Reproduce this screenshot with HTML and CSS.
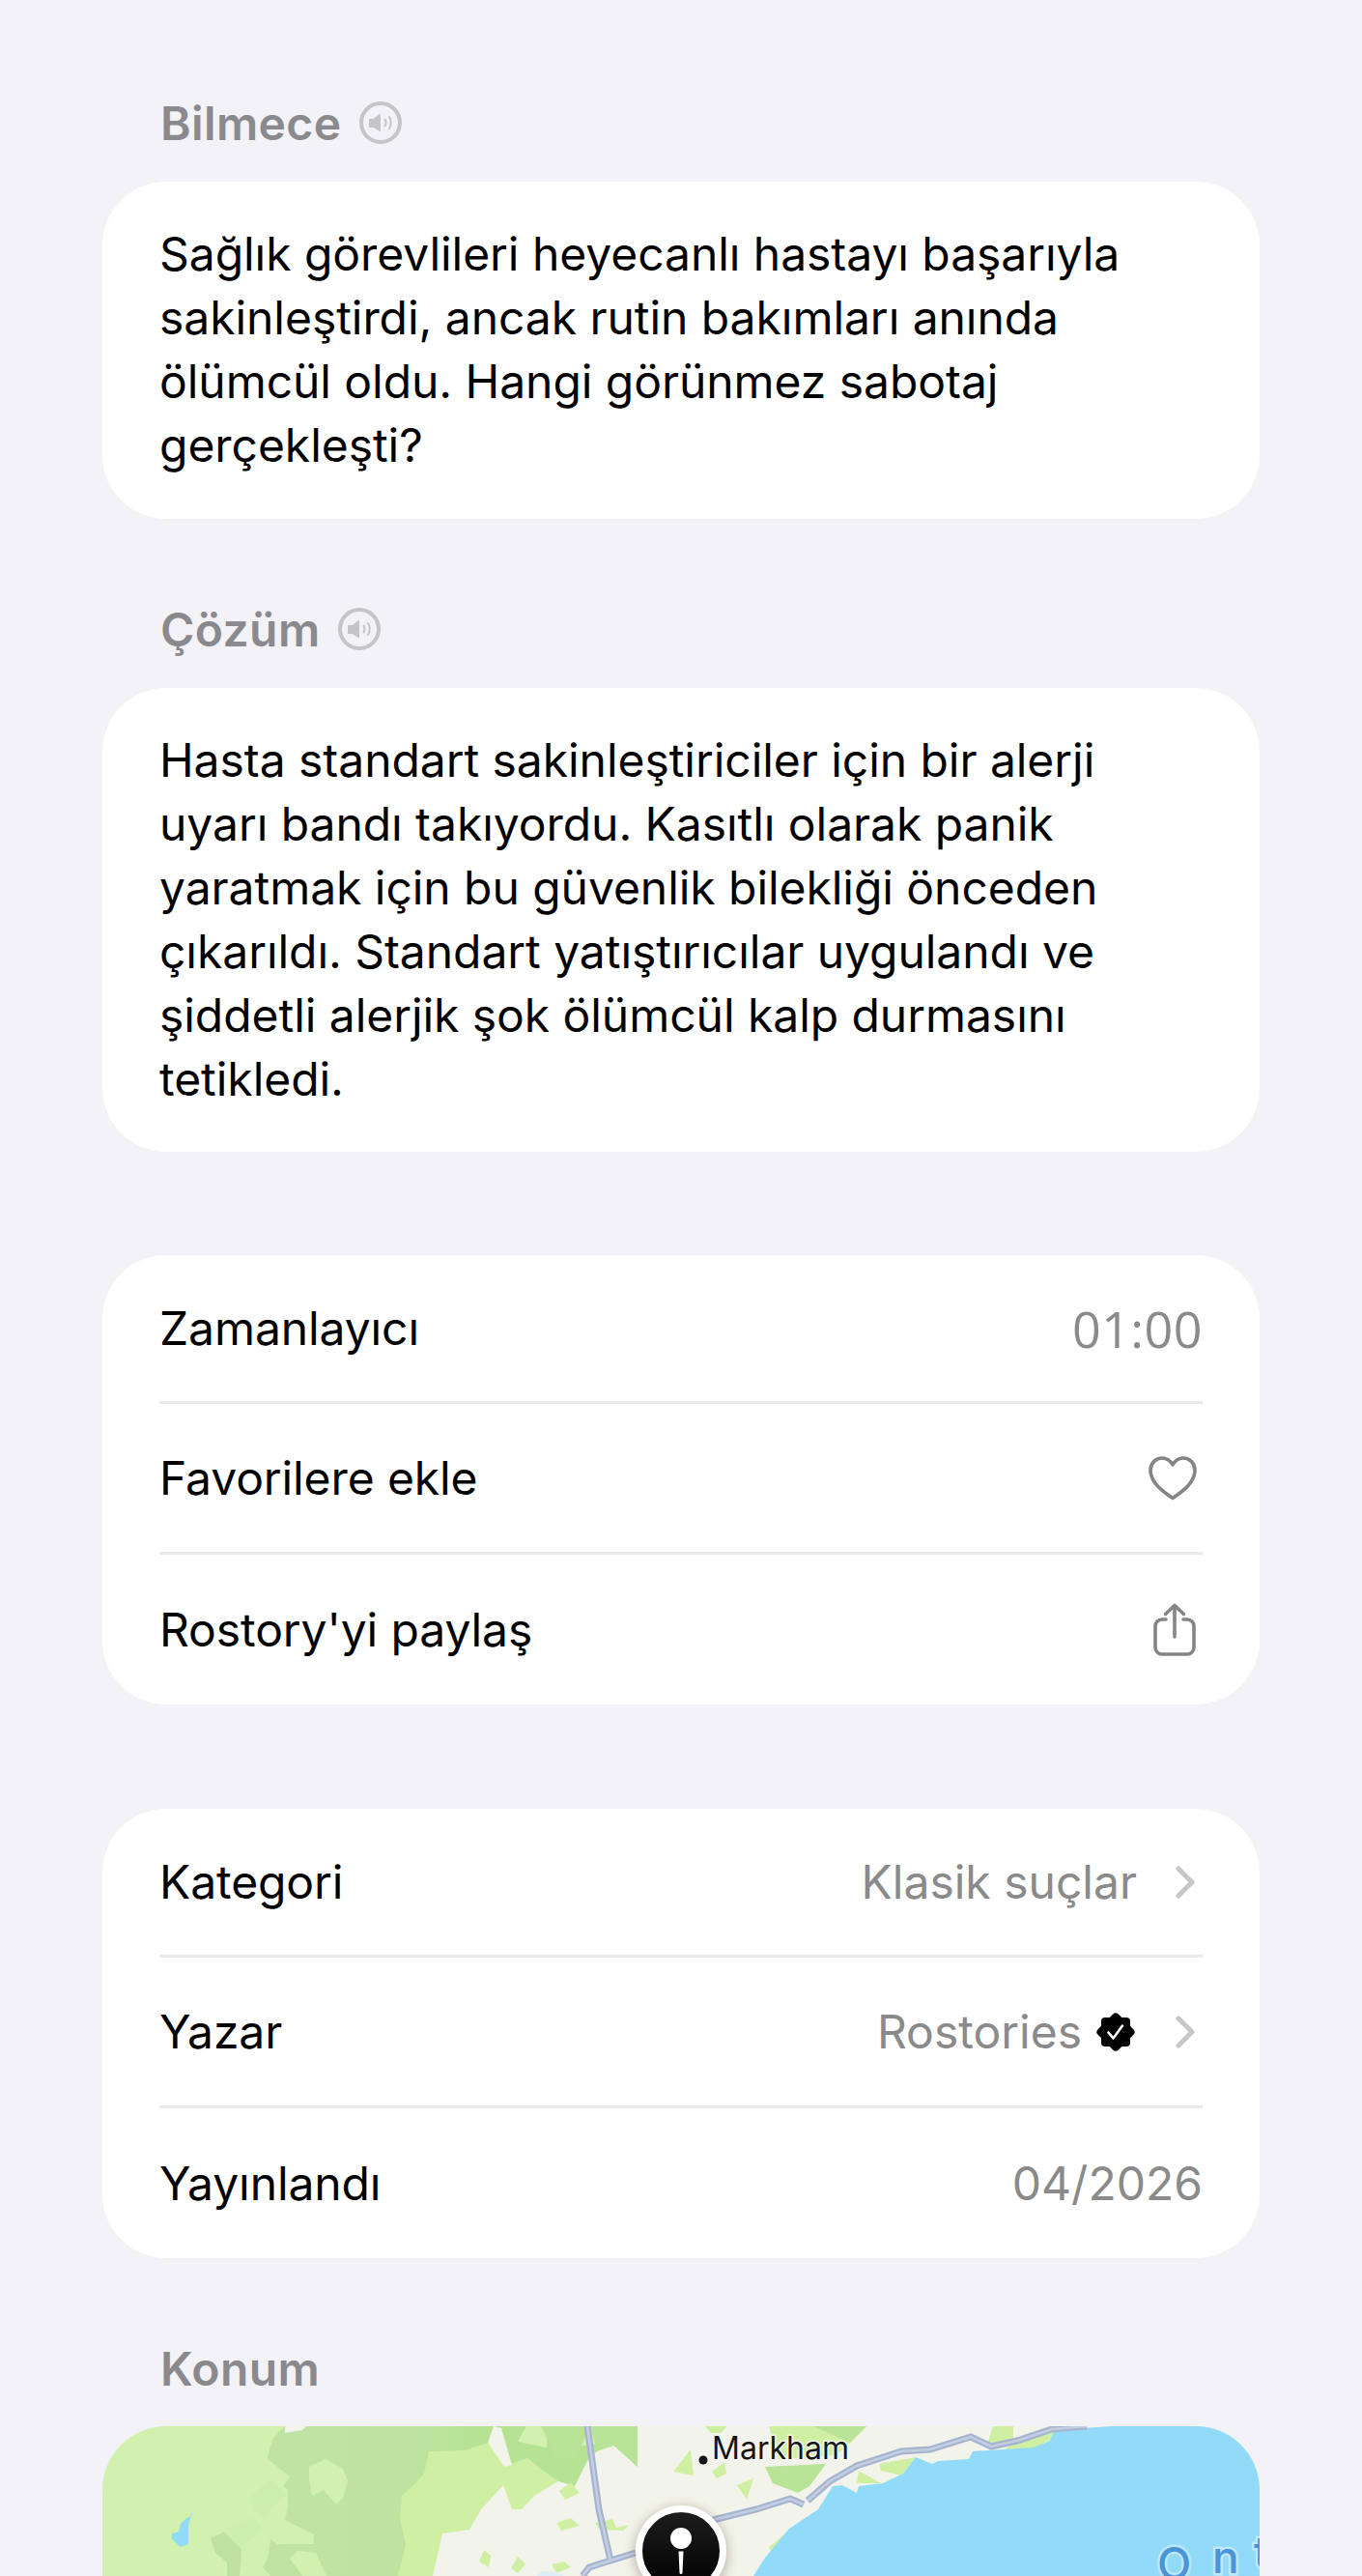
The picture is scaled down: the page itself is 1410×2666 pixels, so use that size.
FILE: index.html
```html
<!DOCTYPE html>
<html lang="tr">

<head>
    <meta charset="UTF-8">
    <meta name="viewport" content="width=device-width, initial-scale=1.0">
    <title>Rostory</title>
    <link rel="stylesheet" href="styles.css">
</head>

<body>
    <div class="page">

        <div class="label first">
            <h2>Bilmece</h2>
            <svg class="speaker" viewBox="0 0 44 44">
                <circle cx="22" cy="22" r="20" fill="none" stroke="#c5c5c8" stroke-width="4" />
                <path d="M10 18h4.5l7.5-5.5v19L14.500 27H10z" fill="#c5c5c8" />
                <path d="M26.500 18.500q2 3.500 0 7M31 16q3.500 6 0 12" fill="none" stroke="#c5c5c8" stroke-width="2" stroke-linecap="round" />
            </svg>
        </div>
        <div class="card text riddle">
            <p>Sağlık görevlileri heyecanlı hastayı başarıyla<br>sakinleştirdi, ancak rutin bakımları anında<br>ölümcül oldu. Hangi görünmez sabotaj<br>gerçekleşti?</p>
        </div>

        <div class="label">
            <h2>Çözüm</h2>
            <svg class="speaker" viewBox="0 0 44 44">
                <circle cx="22" cy="22" r="20" fill="none" stroke="#c5c5c8" stroke-width="4" />
                <path d="M10 18h4.5l7.5-5.5v19L14.500 27H10z" fill="#c5c5c8" />
                <path d="M26.500 18.500q2 3.500 0 7M31 16q3.500 6 0 12" fill="none" stroke="#c5c5c8" stroke-width="2" stroke-linecap="round" />
            </svg>
        </div>
        <div class="card text">
            <p>Hasta standart sakinleştiriciler için bir alerji<br>uyarı bandı takıyordu. Kasıtlı olarak panik<br>yaratmak için bu güvenlik bilekliği önceden<br>çıkarıldı. Standart yatıştırıcılar uygulandı ve<br>şiddetli alerjik şok ölümcül kalp durmasını<br>tetikledi.</p>
        </div>

        <div class="card list">
            <div class="row">
                <span>Zamanlayıcı</span>
                <span class="value timer">01:00</span>
            </div>
            <div class="row">
                <span>Favorilere ekle</span>
                <svg class="heart" viewBox="0 0 50 46">
                    <path d="M25 43.500C15 36.500 2 27.500 2 14.500 2 7.500 7.500 2 14 2c4.800 0 8.500 2.500 11 7 2.500-4.500 6.200-7 11-7 6.500 0 12 5.500 12 12.500 0 13-13 22-23 29z" fill="none" stroke="#858585" stroke-width="3.600" stroke-linejoin="round" />
                </svg>
            </div>
            <div class="row">
                <span>Rostory'yi paylaş</span>
                <svg class="share" viewBox="0 0 44 55">
                    <path d="M13 17H9a7 7 0 0 0-7 7v22a7 7 0 0 0 7 7h26a7 7 0 0 0 7-7V24a7 7 0 0 0-7-7h-4" fill="none" stroke="#858585" stroke-width="3.600" stroke-linecap="round" />
                    <path d="M22 35V3M12.500 11.500 22 2.500l9.500 9" fill="none" stroke="#858585" stroke-width="3.600" stroke-linecap="round" stroke-linejoin="round" />
                </svg>
            </div>
        </div>

        <div class="card list">
            <div class="row">
                <span>Kategori</span>
                <div class="right">
                    <span class="value">Klasik suçlar</span>
                    <svg class="chevron" viewBox="0 0 20 34">
                        <path d="M3 3l14 14L3 31" fill="none" stroke="#c7c7c9" stroke-width="5" stroke-linecap="round" stroke-linejoin="round" />
                    </svg>
                </div>
            </div>
            <div class="row">
                <span>Yazar</span>
                <div class="right">
                    <span class="value">Rostories</span>
                    <svg class="badge" viewBox="0 0 40 40">
                        <rect x="5" y="5" width="30" height="30" rx="4" />
                        <rect x="5" y="5" width="30" height="30" rx="4" transform="rotate(45 20 20)" />
                        <path d="M12.500 20.500l5 6 9.500-13" fill="none" stroke="#fff" stroke-width="2.600" stroke-linecap="round" stroke-linejoin="round" />
                    </svg>
                    <svg class="chevron" viewBox="0 0 20 34">
                        <path d="M3 3l14 14L3 31" fill="none" stroke="#c7c7c9" stroke-width="5" stroke-linecap="round" stroke-linejoin="round" />
                    </svg>
                </div>
            </div>
            <div class="row">
                <span>Yayınlandı</span>
                <span class="value">04/2026</span>
            </div>
        </div>

        <div class="label last">
            <h2>Konum</h2>
        </div>
        <div class="map">
            <svg viewBox="0 0 1198 155" width="1198" height="155">
                <defs>
                    <linearGradient id="forest" x1="0" y1="0" x2="1" y2="0">
                        <stop offset="0" stop-color="#bfe3a2" />
                        <stop offset="0.4" stop-color="#bee3a1" />
                        <stop offset="0.6" stop-color="#b5e392" />
                        <stop offset="1" stop-color="#b6e394" />
                    </linearGradient>
                    <linearGradient id="pinfill" x1="0" y1="0" x2="0" y2="1">
                        <stop offset="0" stop-color="#1e1e1e" />
                        <stop offset="1" stop-color="#000" />
                    </linearGradient>
                    <filter id="pinshadow" x="-40%" y="-40%" width="180%" height="180%">
                        <feGaussianBlur stdDeviation="6" />
                    </filter>
                </defs>

                <rect width="1198" height="155" fill="#d3f1ae" />

                <!-- forest -->
                <path fill="url(#forest)" d="M189 0L181 8 176 14 171 31 171 34 194 52 187 62 192 66 192 84 189 97 219 112 219 122 181 122 174 117 171 137 166 146 174 155H306L340 60 480 80 554 42V0z" />
                <path fill="#bde2a0" d="M112 116L126 109 144 127 142 155H129V141L117 131z" />
                <path fill="#ccf0ac" d="M152 74L174 54 192 71 177 82 167 96 157 87zM126 107L157 94 166 107 144 126z" />
                <path fill="#d3f1ae" d="M214 42L231 34 249 44 254 57 249 74 242 81 229 66 217 72 214 54zM194 137L202 129 221 131 232 155H207z" />
                <path fill="#cff0a2" d="M338 26L375 25 399 17 420 40 440 33 455 45 472 57 489 62 500 90 460 155H306L314 122 308 96 310 72 321 62 333 49z" />

                <!-- land -->
                <path fill="#f2f3ea" d="M352 111L380 107 392 86 415 61 424 86 434 86 447 72 472 57 489 62 502 36 512 26 525 16 554 42V0H1198V155H342z" />
                <path fill="#f2f3ea" d="M189 0H211L207 4 189 7zM399 17L405 0 413 2 424 40 416 42z" />

                <!-- green patches on the land -->
                <path fill="#d3f1ae" d="M430 16L439 0H460V22zM474 0H535L527 16 485 22 472 12z" />
                <path fill="#cff0a2" d="M624 0H647L640 7 630 7zM591 47L609 24 612 51zM631 47L644 37 646 49 636 54zM657 61L674 54 667 76zM690 0H791L774 17 760 30 700 34zM783 46L806 59H781zM804 39L842 32 827 51 806 46zM922 0H943V12L915 22zM947 15L985 0V12L960 25 930 27zM473 67L485 58 494 69 479 76zM470 100L485 95 494 103 475 108zM510 100L528 96 532 105 545 102 540 108 515 107zM390 140L395 128 402 134 400 146zM423 147L430 135 438 143 430 152zM465 143L478 140 485 146 470 152zM714 106L732 104 700 145 690 125z" />
                <path fill="#b9e397" d="M736 0H791L774 17 754 8zM686 42L749 39 732 62 720 69 694 59zM505 0H554V42L530 20 512 26zM454 0H505L490 35 470 32z" />

                <!-- water -->
                <path fill="#91dbf8" d="M674 155L686 136 711 106 741 86 756 62 766 61 781 69 783 62 808 59 829 49 842 32 859 39 865 36 897 34 901 26 964 22 981 15 985 5 1014 2 1044 0H1198V155zM93 87V92L86 96 81 101 79 109 72 111V117L81 125 89 122V104z" />
                <path fill="#dcedf5" d="M450 155L455 150 470 151 478 155z" />

                <!-- roads -->
                <g fill="none" stroke-linejoin="miter">
                    <path stroke="#a6b4d1" stroke-width="7" d="M502 0L514 86 526 139M497 155L504 146 526 139 552 131M632 97L677 86 712 75 726 81M730 77L753 57 781 41 827 26 857 24 899 11 920 21 947 15 983 3 1019 0" />
                    <path stroke="#c5cee1" stroke-width="2.500" d="M502 0L514 86 526 139M497 155L504 146 526 139 552 131M632 97L677 86 712 75 726 81M730 77L753 57 781 41 827 26 857 24 899 11 920 21 947 15 983 3 1019 0" />
                </g>

                <!-- labels -->
                <circle cx="622" cy="35" r="4.500" fill="#141414" />
                <text class="place" x="631" y="34">Markham</text>
                <text class="lake" x="1092 1149 1192" y="159 152 147">Ont</text>

                <!-- pin -->
                <circle cx="599" cy="132" r="49" fill="#5a3a2a" opacity="0.3" filter="url(#pinshadow)" />
                <circle cx="599" cy="129" r="43.500" fill="url(#pinfill)" stroke="#fff" stroke-width="7" />
                <circle cx="599" cy="116" r="11" fill="#fff" />
                <path d="M596.500 129.500h5l-1 22a1.500 1.500 0 0 1-3 0z" fill="#fff" />
            </svg>
        </div>

    </div>
</body>

</html>
```

FILE: styles.css
```css
* {
    padding: 0;
    margin: 0;
    box-sizing: border-box;
}

body {
    background-color: #f2f2f7;
    color: #000;
    font-family: "Inter", "Liberation Sans", sans-serif;
    font-size: 48px;
    overflow: hidden;
}

.page {
    height: 2666px;
    padding: 97px 106px 0;
    overflow: hidden;
}

/* section titles */
.label {
    display: flex;
    align-items: center;
    gap: 18px;
    height: 60px;
    margin: 84px 0 31px;
    padding-left: 60px;
}

.label.first {
    margin-top: 0;
}

.label.last {
    margin-bottom: 30px;
}

.label h2 {
    font-size: 48px;
    font-weight: 600;
    color: #8a8a8e;
    letter-spacing: 0.4px;
}

.speaker {
    width: 44px;
    height: 44px;
}

.card {
    background-color: #fff;
    border-radius: 66px;
}

.card.text {
    padding: 42px 59px;
}

.card.riddle {
    padding-bottom: 43px;
}

.card.text p {
    line-height: 66px;
    letter-spacing: -0.05px;
}

.card.list {
    margin-top: 108px;
    padding: 0 59px;
}

.card.text + .card.list {
    margin-top: 107px;
}

.row {
    display: flex;
    justify-content: space-between;
    align-items: center;
    height: 156px;
    border-bottom: 3px solid #e9e9eb;
    letter-spacing: -0.1px;
}

.row:first-child {
    height: 154px;
}

.row:last-child {
    height: 155px;
    border-bottom: none;
}

.right {
    display: flex;
    align-items: center;
}

.value {
    color: #8a8a8a;
    letter-spacing: 0;
}

.timer {
    font-family: "Open Sans", sans-serif;
    font-size: 52px;
    letter-spacing: 0.5px;
}

.heart {
    width: 50px;
    height: 46px;
    margin-right: 6px;
}

.share {
    width: 44px;
    height: 55px;
    margin-right: 7px;
}

.chevron {
    width: 20px;
    height: 34px;
    margin: 0 8px 0 40px;
}

.badge {
    width: 40px;
    height: 40px;
    margin-left: 15px;
}

.badge + .chevron {
    margin-left: 42px;
}

.map {
    height: 155px;
    border-radius: 66px 66px 0 0;
    overflow: hidden;
}

.map svg {
    display: block;
}

.place {
    font-family: "Inter", sans-serif;
    font-size: 32px;
    fill: #151515;
    stroke: #f4f6ee;
    stroke-width: 3px;
    paint-order: stroke;
}

.lake {
    font-family: "Inter", sans-serif;
    font-size: 46px;
    font-weight: 500;
    fill: #4a95da;
    stroke: #bde7f8;
    stroke-width: 5px;
    paint-order: stroke;
}
```
